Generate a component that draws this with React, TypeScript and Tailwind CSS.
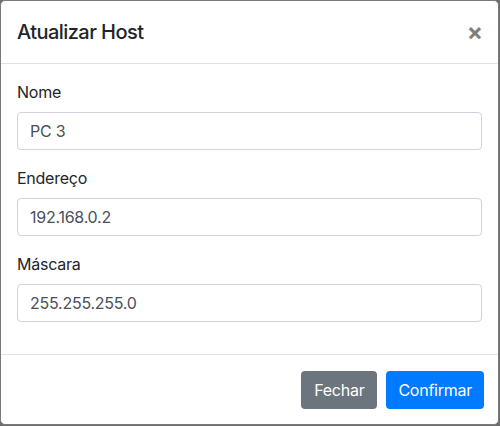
import React from "react";

const font = { fontFamily: "Inter, 'Liberation Sans', sans-serif" };

function Field({ label, value }: { label: string; value: string }) {
  return (
    <div className="mb-4">
      <label className="mb-2 block text-[16px] leading-[24px] tracking-[-0.25px] text-[#212529]">{label}</label>
      <div className="flex h-[38px] w-full items-center rounded-[4px] border border-[#ced4da] bg-white px-3 text-[16px] tracking-[-0.25px] text-[#495057]">
        {value}
      </div>
    </div>
  );
}

export default function App() {
  return (
    <div className="h-[426px] w-[500px] bg-[#6c6c6c]" style={font}>
      <div className="flex h-[425px] w-[499px] flex-col rounded-[5px] border border-[#7a7a7a] bg-white">
        <div className="flex h-[63px] items-center justify-between border-b border-[#dee2e6] pl-4 pr-[15px]">
          <h5 className="text-[20px] font-medium leading-[30px] tracking-[-0.55px] text-[#212529]">Atualizar Host</h5>
          <span className="text-[24px] font-bold leading-none text-black opacity-50">×</span>
        </div>
        <div className="flex-1 px-4 pt-4">
          <Field label="Nome" value="PC 3" />
          <Field label="Endereço" value="192.168.0.2" />
          <Field label="Máscara" value="255.255.255.0" />
        </div>
        <div className="flex items-center justify-end gap-[9px] border-t border-[#dee2e6] pb-[15px] pl-4 pr-[14px] pt-4">
          <button className="h-[38px] rounded-[4px] bg-[#6c757d] px-[13px] text-[16px] tracking-[-0.25px] text-white">Fechar</button>
          <button className="h-[38px] rounded-[4px] bg-[#007bff] px-3 text-[16px] tracking-[-0.25px] text-white">Confirmar</button>
        </div>
      </div>
    </div>
  );
}
